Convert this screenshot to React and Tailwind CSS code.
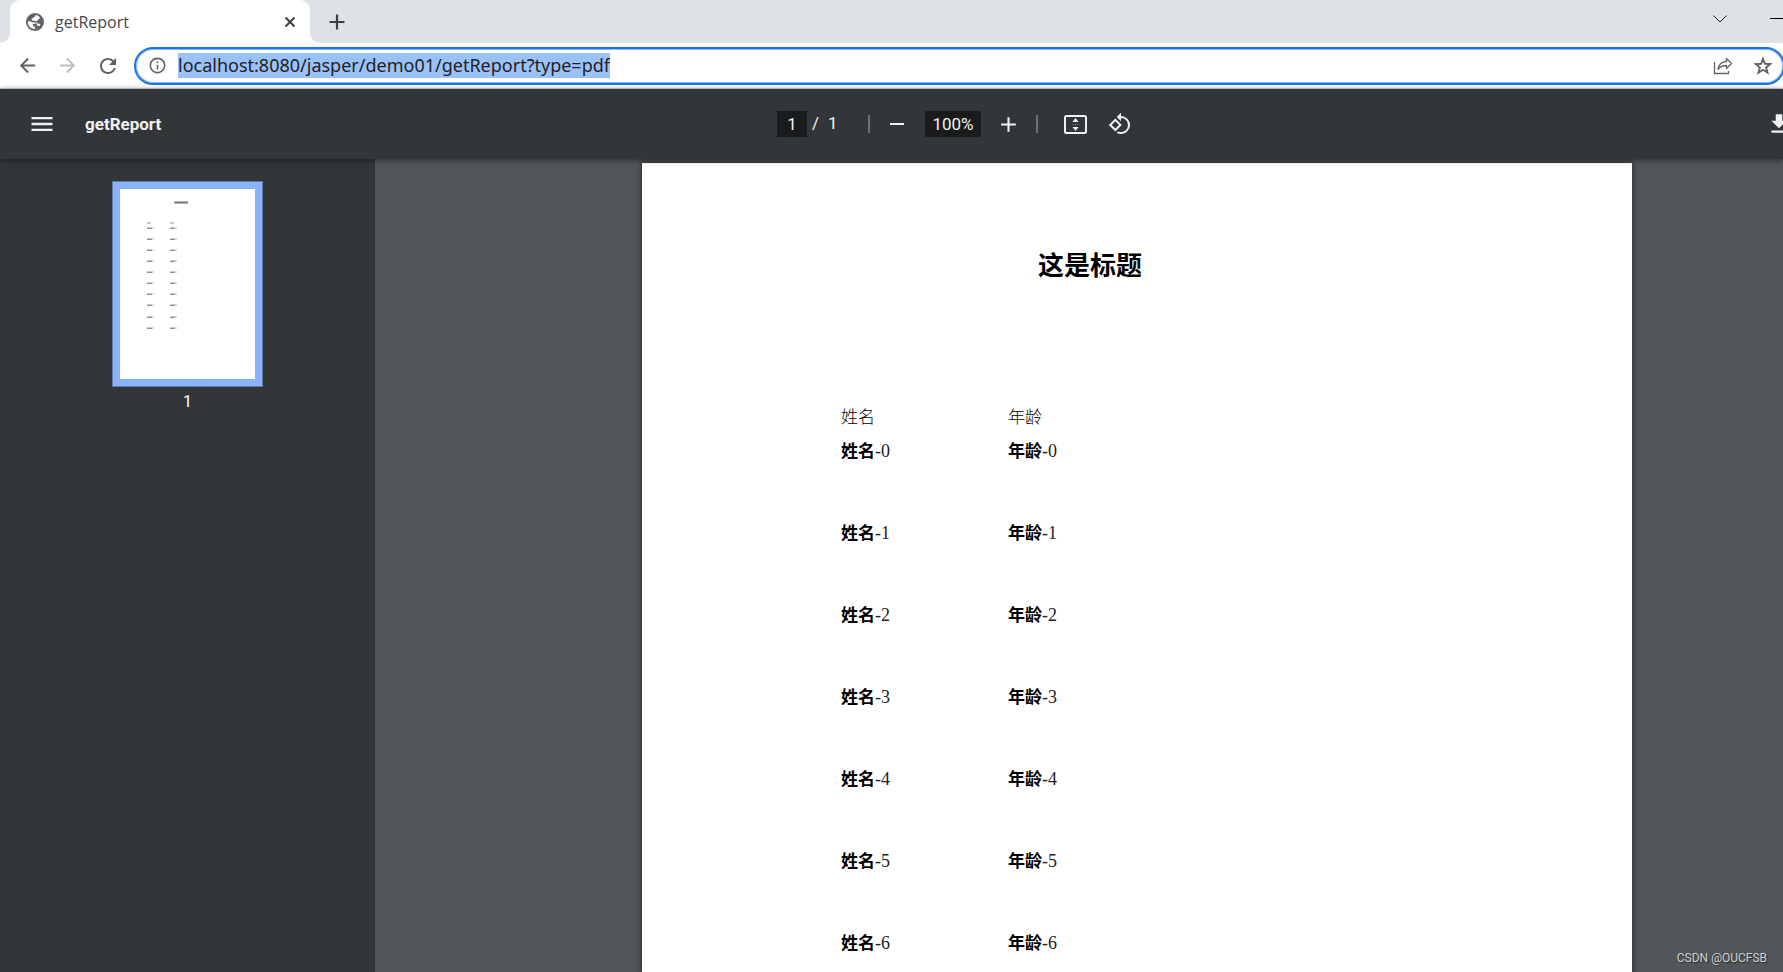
import { useState } from 'react';
import {
  MdAdd,
  MdArrowBack,
  MdArrowForward,
  MdFileDownload,
  MdInfoOutline,
  MdMenu,
  MdRefresh,
  MdRemove,
  MdRotate90DegreesCcw,
} from 'react-icons/md';

const rows = Array.from({ length: 7 }, (_, i) => ({ name: `-${i}`, age: `-${i}` }));

const thumbLines = [39, 50, 61, 72, 83, 94, 105, 116, 128, 139];

const GlobeIcon = () => (
  <svg viewBox="0 0 18 18" className="w-[18px] h-[18px]">
    <circle cx="9" cy="9" r="9" fill="#5f6368" />
    <path
      d="M10.500 1.900C9 2.200 9.200 3.400 8.200 4.200 7.300 4.900 5.600 5 5.600 6.400c0 1.300 1.600 1.300 3 1.400 1.500.1 1.600 1.700 2.700 2.400 1 .6 2.400.1 2.900 1.100.3.700-.2 1.400-.9 1.700-.9.300-1.900-.1-2.300-.9-.4-.9-.1-1.900-1-2.400C9 9.200 7.600 9.800 6.500 9.300 5.300 8.800 3.500 8 1.900 8.300c-.3 2.700 1 5.300 3.300 6.700 1.200.8 2.700 1.200 4.100 1.100.2-1.300-.4-2.300-1.500-2.900-.9-.5-1-1.300-.9-2.200l2.200-.1 1.500-2.900 1.600-1.300c1-.3 1.800-1.200 1.500-2.200-.2-.8-.8-1.400-1.500-1.800z"
      fill="#fff"
    />
  </svg>
);

const CloseIcon = () => (
  <svg viewBox="0 0 18 18" className="w-[18px] h-[18px]" fill="none" stroke="#3c4043" strokeWidth="2">
    <path d="M4.500 4.500l9 9M13.500 4.500l-9 9" />
  </svg>
);

const NewTabIcon = () => (
  <svg viewBox="0 0 24 24" className="w-6 h-6" fill="none" stroke="#3c4043" strokeWidth="2.200">
    <path d="M12 4.500v15M4.500 12h15" />
  </svg>
);

const StarIcon = () => (
  <svg viewBox="0 0 22 22" className="w-[22px] h-[22px]" fill="none" stroke="currentColor" strokeWidth="1.900">
    <path d="M11 3.800l1.900 5 5.300.3-4.100 3.400 1.400 5.200L11 14.800l-4.500 2.900 1.400-5.200L3.800 9.100l5.300-.3z" />
  </svg>
);

const ShareIcon = () => (
  <svg viewBox="0 0 20 18" className="w-5 h-[18px]" fill="none" stroke="currentColor">
    <path d="M1.500 5v11.500h14V14" strokeWidth="1.300" />
    <path
      d="M13.500 1.500l5 5-5 5V8.500C9.500 8.500 7 9.500 5 12.500 5.500 8 8.500 4.800 13.500 4.500z"
      strokeWidth="1.300"
      strokeLinejoin="round"
    />
  </svg>
);

const FitIcon = () => (
  <svg viewBox="0 0 23 19" className="w-[23px] h-[19px]">
    <rect x="1" y="1" width="21" height="17" rx="1.500" fill="none" stroke="currentColor" strokeWidth="2" />
    <path d="M11.500 3l3 4h-6zM11.500 16l3-4h-6z" fill="currentColor" />
    <path d="M8.500 9h1v1h-1zM11 9h1v1h-1zM13.500 9h1v1h-1z" fill="currentColor" opacity="0.5" />
  </svg>
);

const Thumbnail = () => (
  <svg viewBox="0 0 135 190" className="w-[135px] h-[190px] bg-white">
    <rect x="54" y="12" width="14" height="3" fill="#b4b4b4" />
    <rect x="55" y="13" width="13" height="1" fill="#777777" />
    {[27, 50].map((x) => (
      <g key={x}>
        <rect x={x} y="33" width="4" height="2" fill="#cccccc" />
        {thumbLines.map((y) => (
          <g key={y}>
            <rect x={x} y={y - 1} width="5" height="2" fill="#c8c8c8" />
            <rect x={x} y={y} width="5" height="1" fill="#909090" />
            <rect x={x + 5} y={y - 1} width="2" height="2" fill="#dedede" />
          </g>
        ))}
      </g>
    ))}
  </svg>
);

const TabStrip = () => (
  <div className="flex h-[43px] shrink-0 items-end bg-[#dee1e6]">
    <div className="w-2.5 h-2.5 bg-white">
      <div className="h-full rounded-br-[10px] bg-[#dee1e6]" />
    </div>
    <div className="flex h-full w-[300px] items-center rounded-t-[10px] bg-white pl-4 pr-[11px]">
      <GlobeIcon />
      <span className="ml-[11px] flex-1 text-base text-[#45494d]">getReport</span>
      <button type="button" aria-label="Close tab">
        <CloseIcon />
      </button>
    </div>
    <div className="w-2.5 h-2.5 bg-white">
      <div className="h-full rounded-bl-[10px] bg-[#dee1e6]" />
    </div>
    <button type="button" aria-label="New tab" className="self-center ml-[5px]">
      <NewTabIcon />
    </button>
    <div className="flex-1" />
    <button type="button" aria-label="Search tabs" className="mr-[43px] self-center pb-1.5">
      <svg viewBox="0 0 14 8" className="w-[14px] h-2" fill="none" stroke="#202124">
        <path d="M.5.5l6.500 6.500 6.500-6.500" />
      </svg>
    </button>
    <button type="button" aria-label="Minimize" className="self-center pb-1.5">
      <svg viewBox="0 0 13 1" className="w-[13px] h-px">
        <path d="M0 0h13v1H0z" />
      </svg>
    </button>
  </div>
);

const AddressBar = () => {
  const [url, setUrl] = useState('localhost:8080/jasper/demo01/getReport?type=pdf');

  return (
    <div className="flex h-[46px] shrink-0 items-center border-b border-[#d5d7da] bg-white pl-4 text-[#5f6368]">
      <button type="button" aria-label="Back">
        <MdArrowBack className="w-[23px] h-[23px]" />
      </button>
      <button type="button" aria-label="Forward" className="ml-[17px] text-[#bdc1c6]">
        <MdArrowForward className="w-[23px] h-[23px]" />
      </button>
      <button type="button" aria-label="Reload" className="ml-[17px]">
        <MdRefresh className="w-6 h-6" />
      </button>
      <div className="ml-[14px] mr-[-2px] flex h-[38px] flex-1 items-center rounded-full border-2 border-[#1a73e8] pl-3 pr-[9px] shadow-[inset_0_0_0_1px_#8ab8f5]">
        <MdInfoOutline className="w-[19px] h-[19px]" />
        <input
          type="text"
          aria-label="Address"
          value={url}
          onChange={(e) => setUrl(e.target.value)}
          className="ml-[11px] h-[25px] field-sizing-content bg-[#9bc2f7] pb-0.5 font-['Noto_Sans',sans-serif] text-lg text-[#202124] outline-none"
        />
        <div className="flex-1" />
        <button type="button" aria-label="Share">
          <ShareIcon />
        </button>
        <button type="button" aria-label="Bookmark" className="ml-[19px]">
          <StarIcon />
        </button>
      </div>
    </div>
  );
};

const PdfToolbar = () => {
  const [page, setPage] = useState('1');
  const [zoom, setZoom] = useState('100%');

  return (
    <div className="relative z-10 flex h-[70px] shrink-0 items-center bg-[#323639] font-[Roboto,sans-serif] text-[17px] text-[#f1f1f1] shadow-[0_1px_6px_rgba(0,0,0,0.5)]">
      <div className="flex w-[777px] items-center pl-7">
        <button type="button" aria-label="Menu">
          <MdMenu className="w-7 h-7" />
        </button>
        <h1 className="ml-[29px] pt-0.5 font-bold">getReport</h1>
      </div>
      <input
        type="text"
        aria-label="Page number"
        value={page}
        onChange={(e) => setPage(e.target.value)}
        className="w-[30px] h-[26px] bg-[#191b1c] text-center"
      />
      <span className="ml-[5px] w-4">/</span>
      <span className="w-2">1</span>
      <div className="ml-8 w-0.5 h-[18px] bg-[#6f7274]" />
      <button type="button" aria-label="Zoom out" className="ml-[15px]">
        <MdRemove className="w-6 h-6" />
      </button>
      <input
        type="text"
        aria-label="Zoom level"
        value={zoom}
        onChange={(e) => setZoom(e.target.value)}
        className="ml-4 w-14 h-[26px] bg-[#191b1c] text-center"
      />
      <button type="button" aria-label="Zoom in" className="ml-[15px]">
        <MdAdd className="w-[25px] h-[25px]" />
      </button>
      <div className="ml-[15px] w-0.5 h-[18px] bg-[#6f7274]" />
      <button type="button" aria-label="Fit to page" className="ml-[26px]">
        <FitIcon />
      </button>
      <button type="button" aria-label="Rotate" className="ml-[21px]">
        <MdRotate90DegreesCcw className="w-6 h-6" />
      </button>
      <div className="flex-1" />
      <button type="button" aria-label="Download" className="mr-[-9px]">
        <MdFileDownload className="w-[26px] h-[26px]" />
      </button>
    </div>
  );
};

const Sidebar = () => (
  <aside className="flex w-[375px] shrink-0 flex-col items-center bg-[#323639] pt-[22px] font-[Roboto,sans-serif] text-white">
    <button type="button" aria-label="Page 1" className="border border-[#5d7aa8] bg-[#8ab4f8] p-[7px]">
      <Thumbnail />
    </button>
    <div className="mt-[3px] text-base">1</div>
  </aside>
);

const ReportPage = () => (
  <div className="ml-[267px] mr-[151px] mt-1 h-full flex-1 bg-white pt-[84px] text-black shadow-[0_0_7px_rgba(0,0,0,0.6)]">
    <h2 className="pl-[396px] text-[26px] leading-10 font-bold">这是标题</h2>
    <table className="ml-[199px] mt-[119px] text-left text-[17px] leading-6">
      <thead>
        <tr className="align-top h-[33px]">
          <th className="w-[167px] p-0 font-light">姓名</th>
          <th className="w-[167px] p-0 font-light">年龄</th>
        </tr>
      </thead>
      <tbody>
        {rows.map((row) => (
          <tr key={row.name} className="h-[82px] align-top">
            <td className="p-0">
              <b className="font-bold">姓名</b>
              <span className="text-lg leading-6 text-[#222222]">{row.name}</span>
            </td>
            <td className="p-0">
              <b className="font-bold">年龄</b>
              <span className="text-lg leading-6 text-[#222222]">{row.age}</span>
            </td>
          </tr>
        ))}
      </tbody>
    </table>
  </div>
);

const App = () => (
  <div className="relative flex h-screen flex-col overflow-hidden font-['Open_Sans','Noto_Sans_CJK_SC',sans-serif]">
    <TabStrip />
    <AddressBar />
    <PdfToolbar />
    <div className="flex min-h-0 flex-1">
      <Sidebar />
      <main className="flex flex-1 items-start overflow-hidden bg-[#525659] font-['Liberation_Serif','Noto_Sans_CJK_SC',serif]">
        <ReportPage />
      </main>
    </div>
    <div className="absolute bottom-1.5 right-4 font-[Roboto,sans-serif] text-xs text-[#d0d1d2] [text-shadow:1px_1px_1px_rgba(0,0,0,0.5)]">
      CSDN @OUCFSB
    </div>
  </div>
);

export default App;
